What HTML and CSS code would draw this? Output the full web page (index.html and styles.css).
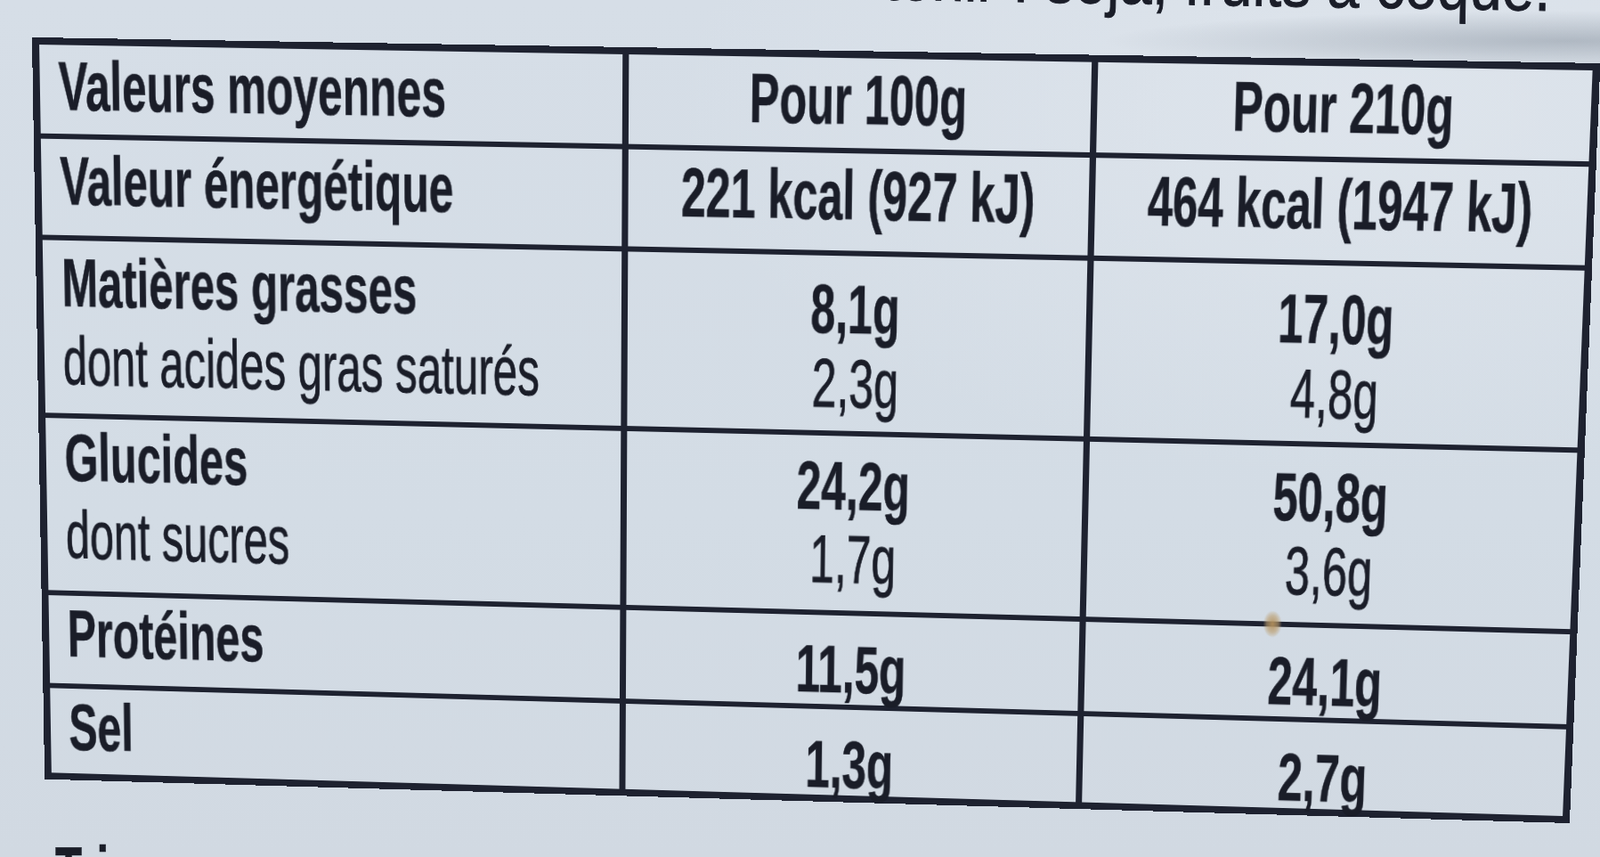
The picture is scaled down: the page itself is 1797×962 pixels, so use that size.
FILE: index.html
```html
<!DOCTYPE html>
<html lang="fr">
<head>
<meta charset="utf-8">
<title>Valeurs nutritionnelles</title>
<link rel="stylesheet" href="styles.css">
</head>
<body>
<div class="note"><span class="sx">Peut contenir : soja, fruits à coque.</span></div>
<div class="sheet">
  <div class="nut">
    <div class="c lab r1"><span class="sx b">Valeurs moyennes</span></div>
    <div class="c val r1"><span class="sx b">Pour 100g</span></div>
    <div class="c val r1 last"><span class="sx b">Pour 210g</span></div>

    <div class="c lab r2"><span class="sx b">Valeur énergétique</span></div>
    <div class="c val r2"><span class="sx b">221 kcal (927 kJ)</span></div>
    <div class="c val r2 last"><span class="sx b">464 kcal (1947 kJ)</span></div>

    <div class="c lab r3"><div class="ln"><span class="sx b">Matières grasses</span></div><div class="ln"><span class="sx">dont acides gras saturés</span></div></div>
    <div class="c val r3"><div class="ln"><span class="sx b">8,1g</span></div><div class="ln"><span class="sx">2,3g</span></div></div>
    <div class="c val r3 last"><div class="ln"><span class="sx b">17,0g</span></div><div class="ln"><span class="sx">4,8g</span></div></div>

    <div class="c lab r4"><div class="ln"><span class="sx b">Glucides</span></div><div class="ln"><span class="sx">dont sucres</span></div></div>
    <div class="c val r4"><div class="ln"><span class="sx b">24,2g</span></div><div class="ln"><span class="sx">1,7g</span></div></div>
    <div class="c val r4 last"><div class="ln"><span class="sx b">50,8g</span></div><div class="ln"><span class="sx">3,6g</span></div></div>

    <div class="c lab r5"><span class="sx b">Protéines</span></div>
    <div class="c val r5"><span class="sx b">11,5g</span></div>
    <div class="c val r5 last stain"><span class="sx b">24,1g</span></div>

    <div class="c lab r6 bottom"><span class="sx b">Sel</span></div>
    <div class="c val r6 bottom"><span class="sx b">1,3g</span></div>
    <div class="c val r6 bottom last"><span class="sx b">2,7g</span></div>
  </div>
</div>
<div class="foot"><span class="sx b">Tri</span></div>
</body>
</html>
```
FILE: styles.css
```css
html, body {
  margin: 0;
  padding: 0;
  width: 1797px;
  height: 962px;
  overflow: hidden;
}

body {
  font-family: "Liberation Sans", Arial, sans-serif;
  color: #1a1d28;
  font-size: 77px;
  line-height: 84px;
  background:
    radial-gradient(ellipse 520px 34px at 1760px 46px, rgba(140, 150, 162, 0.55), rgba(140, 150, 162, 0) 100%),
    radial-gradient(ellipse 800px 420px at 1550px 120px, rgba(230, 235, 241, 0.5), rgba(230, 235, 241, 0) 100%),
    linear-gradient(180deg, #d6dee7 0%, #d3dce5 60%, #d1d9e2 100%);
}

.sx {
  display: inline-block;
  transform: scaleX(0.64);
  white-space: nowrap;
  -webkit-text-stroke: 0.9px #1a1d28;
}

.b {
  font-weight: 700;
  -webkit-text-stroke: 0.6px #1a1d28;
}

.note {
  margin-top: -56px;
  height: 84px;
  padding-right: 55px;
  text-align: right;
  transform-origin: right center;
  transform: rotate(0.95deg);
}

.note .sx {
  transform-origin: right center;
  transform: scaleX(0.85);
}

.sheet {
  padding: 14px 0 0 36px;
}

.nut {
  display: grid;
  width: 1701px;
  grid-template-columns: 655.5px 513px 532.5px;
  grid-template-rows: 105.5px 115.5px 204px 206px 109px 100px;
  border: 8px solid #1e2230;
  transform-origin: 4px 4px;
  transform: matrix3d(0.99982, 0.016541, 0, -0.000014788, 0.016966, 0.99978, 0, 0.000032605, 0, 0, 1, 0, 0, 0, 0, 1);
}

.c {
  border-right: 7px solid #1e2230;
  border-bottom: 6px solid #1e2230;
}

.c.last {
  border-right: 0;
}

.c.bottom {
  border-bottom: 0;
}

.lab {
  padding-left: 21px;
}

.lab .sx {
  transform-origin: left center;
}

.lab .ln {
  height: 90px;
}

.val {
  display: flex;
  flex-direction: column;
  align-items: center;
}

.val .sx {
  transform-origin: center center;
}

.val .ln {
  height: 84px;
}

.lab.r1 { padding-top: 4px; }
.val.r1 { padding-top: 4px; }
.lab.r2 { padding-top: 5px; }
.val.r2 { padding-top: 5px; }
.lab.r3 { padding-top: 6px; }
.val.r3 { padding-top: 18px; }
.lab.r4 { padding-top: 3px; }
.val.r4 { padding-top: 15px; }
.lab.r5 { padding-top: 2px; }
.val.r5 { padding-top: 20px; }
.lab.r6 { padding-top: 3px; }
.val.r6 { padding-top: 22px; }

.stain {
  position: relative;
}

.stain::before {
  content: "";
  position: absolute;
  left: 196px;
  top: -18px;
  width: 20px;
  height: 30px;
  border-radius: 50%;
  background: radial-gradient(ellipse at center, rgba(180, 145, 92, 0.95) 0%, rgba(186, 156, 108, 0.6) 45%, rgba(190, 160, 110, 0) 75%);
}

.foot {
  margin-top: 38px;
  padding-left: 62px;
}

.foot .sx {
  transform-origin: left center;
}
```
